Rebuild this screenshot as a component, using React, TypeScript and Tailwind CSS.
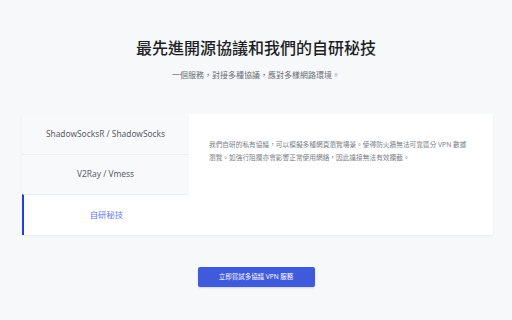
import React, { useState } from 'react';

const tabs = [
  { key: 'ss', label: 'ShadowSocksR / ShadowSocks' },
  { key: 'v2', label: 'V2Ray / Vmess' },
  { key: 'own', label: '自研秘技' },
];

const font = { fontFamily: '"Noto Sans", "Noto Sans CJK TC", sans-serif' };

export default function App() {
  const [active, setActive] = useState('own');

  return (
    <div className="w-[512px] h-[320px] bg-[#f7f8fa] flex flex-col items-center pt-[37px]" style={font}>
      <h1 className="text-[16px] leading-[22px] font-medium text-[#1c1e24]">最先進開源協議和我們的自研秘技</h1>
      <p className="mt-[10px] text-[8px] leading-[12px] text-[#6b6f78]">一個服務，對接多種協議，應對多樣網路環境。</p>

      <div className="mt-[33px] w-[471px] self-start ml-[22px] flex bg-white shadow-[0_1px_2px_rgba(0,0,0,0.06)]">
        <div className="w-[167px] flex flex-col bg-[#f8f9fb]">
          {tabs.map((t, i) => (
            <button
              key={t.key}
              onClick={() => setActive(t.key)}
              className={
                'h-[40px] flex items-center justify-center text-[8.4px] ' +
                (i > 0 ? 'border-t border-[#eceef2] ' : '') +
                (active === t.key
                  ? 'bg-white text-[#6079f0] border-l-2 border-l-[#1b3fe6] h-[41px]'
                  : 'text-[#5a5e66]')
              }
            >
              {t.label}
            </button>
          ))}
        </div>
        <div className="flex-1 px-[20px] pt-[24px] text-[6.7px] leading-[13px] text-[#7a7e86]">
          我們自研的私有協議，可以模擬多種網頁瀏覽場景。使得防火牆無法可靠區分 VPN 數據
          <br />
          瀏覽。如強行阻攔亦會影響正常使用網絡，因此達接無法有效攔截。
        </div>
      </div>

      <button className="mt-[32px] w-[117px] h-[20px] rounded-[2px] bg-[#3f5bdc] text-white text-[6.5px] shadow-[0_1px_2px_rgba(0,0,0,0.15)]">
        立即嘗試多協議 VPN 服務
      </button>
    </div>
  );
}
